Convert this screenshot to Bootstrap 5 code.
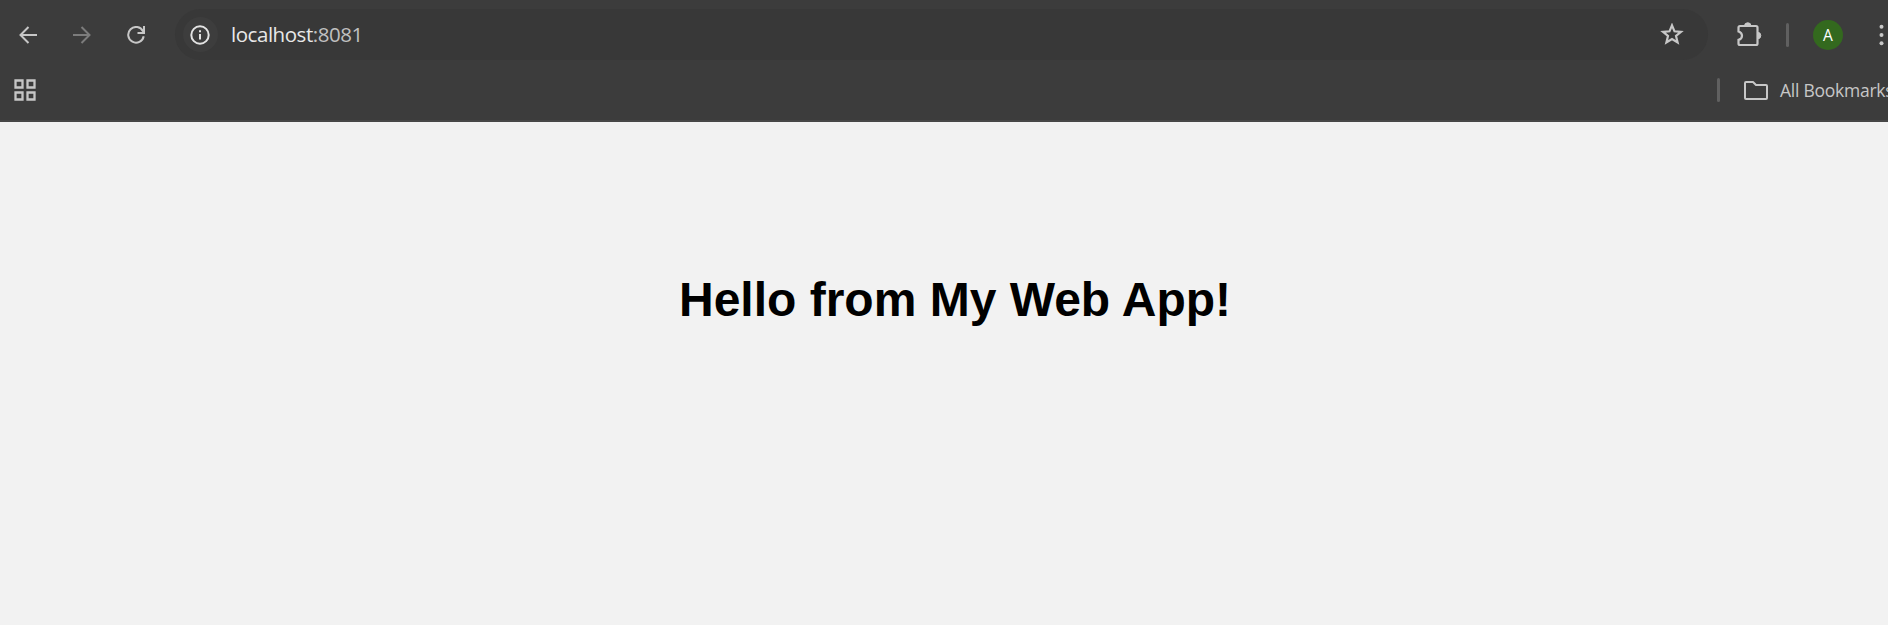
<!DOCTYPE html>
<html lang="en">
<head>
<meta charset="utf-8">
<title>localhost:8081</title>
<link href="https://cdn.jsdelivr.net/npm/bootstrap@5.3.0/dist/css/bootstrap.min.css" rel="stylesheet">
<style>
html, body { height: 100%; }
body { background: #f2f2f2; font-family: "Open Sans", "Noto Sans", sans-serif; color: #c7c7c7; }
svg { display: block; flex: none; }
.chrome { height: 122px; background: #3c3c3c; border-bottom: 2px solid #474747; white-space: nowrap; }
.toolbar { height: 69px; padding-left: 19px; }
.nav-icons { gap: 36px; width: 156px; }
.dim { color: #7c7c7c; }
.omnibox { width: 1533px; height: 51px; background: #383838; padding: 0 24px 0 8px; }
.site-info { width: 35px; height: 35px; background: #3d3d3d; color: #e3e3e3; padding-right: 1px; }
.address { font-size: 20.5px; line-height: 28px; letter-spacing: -.46px; margin-left: 13px; padding-bottom: 2px; color: #e8e8e8; }
.port { color: #c0c0c0; }
.divider { width: 3px; height: 24px; background: #606060; border-radius: 2px; }
.gap-before { margin-left: 24px; }
.puzzle { margin: 0 -1px 0 29px; }
.kebab { margin-left: 36px; }
.avatar { width: 30px; height: 30px; background: #33691e; color: #fff; font-size: 15.5px; line-height: 30px; }
.bookmarks { height: 42px; padding-left: 14px; width: 1888px; }
.all-label { font-size: 17.5px; line-height: 24px; letter-spacing: -.25px; margin-left: 12px; width: 108px; padding-bottom: 1px; }
.page-title { color: #000; font: bold 48px/56px "Liberation Sans", Arial, sans-serif; padding-top: 150px; margin-left: 22px; }
</style>
</head>
<body class="overflow-hidden">
<header class="chrome overflow-hidden">
  <nav class="toolbar d-flex align-items-center" aria-label="Browser">
    <div class="nav-icons d-flex align-items-center">
      <svg width="18" height="18" viewBox="0 0 18 18" fill="none" stroke="currentColor" stroke-width="2"><path d="M18 9H2M9.5 1 1.5 9l8 8"/></svg>
      <svg class="dim" width="18" height="18" viewBox="0 0 18 18" fill="none" stroke="currentColor" stroke-width="2"><path d="M0 9h16M8.5 1l8 8-8 8"/></svg>
      <svg width="18" height="18" viewBox="0 0 18 18" fill="none" stroke="currentColor" stroke-width="2"><path d="M16.7 10.2A7.8 7.8 0 1 1 16 5.300L17 7M17 0v7h-6.500"/></svg>
    </div>
    <div class="omnibox rounded-pill d-flex align-items-center">
      <div class="site-info rounded-circle d-flex align-items-center justify-content-center">
        <svg width="20" height="20" viewBox="0 0 20 20" fill="none" stroke="currentColor" stroke-width="2"><circle cx="10" cy="10" r="8.700"/><path d="M10 9v5.500M10 5.200v2"/></svg>
      </div>
      <div class="address">localhost<span class="port">:8081</span></div>
      <svg class="ms-auto" width="24" height="23" viewBox="0 0 24 23" fill="none" stroke="currentColor" stroke-width="2.200"><path d="m12 2.300 2.500 6 6.500.500-5 4.200 1.600 6.500L12 16.100 6.400 19.500 8 13 3 8.800l6.500-.5z"/></svg>
    </div>
    <svg class="puzzle" width="26" height="26" viewBox="0 0 26 26"><path d="M3 4h16q1.500 0 1.500 1.500v16q0 1.500-1.500 1.500H3Q1.500 23 1.500 21.500v-3.600q3.500-1 3.500-4.200T1.500 9.500v-4Q1.500 4 3 4z" fill="none" stroke="currentColor" stroke-width="2.200"/><path d="M7.500 4a3.200 3.200 0 0 1 6.500 0zM20.500 10.300a3.300 3.300 0 0 1 0 6.600z" fill="currentColor" stroke="currentColor"/></svg>
    <div class="divider gap-before"></div>
    <div class="avatar rounded-circle text-center gap-before">A</div>
    <svg class="kebab" width="5" height="22" viewBox="0 0 5 22" fill="currentColor"><circle cx="2.500" cy="2.800" r="2"/><circle cx="2.500" cy="11" r="2"/><circle cx="2.500" cy="19.200" r="2"/></svg>
  </nav>
  <div class="bookmarks d-flex align-items-center">
    <svg width="22" height="22" viewBox="0 0 22 22" fill="none" stroke="currentColor" stroke-width="2.300"><path d="M1.500 1.500h7v7h-7zM13.500 1.500h7v7h-7zM1.500 13.500h7v7h-7zM13.500 13.500h7v7h-7z"/></svg>
    <div class="divider ms-auto"></div>
    <svg class="gap-before" width="24" height="19" viewBox="0 0 24 19" fill="none" stroke="currentColor" stroke-width="2" stroke-linejoin="round"><path d="M2 1h7l3 3h10q1 0 1 1v12q0 1-1 1H2q-1 0-1-1V2q0-1 1-1z"/></svg>
    <div class="all-label">All Bookmarks</div>
  </div>
</header>
<main class="text-center">
  <h1 class="page-title mb-0">Hello from My Web App!</h1>
</main>
<script src="https://cdn.jsdelivr.net/npm/bootstrap@5.3.0/dist/js/bootstrap.bundle.min.js"></script>
</body>
</html>
